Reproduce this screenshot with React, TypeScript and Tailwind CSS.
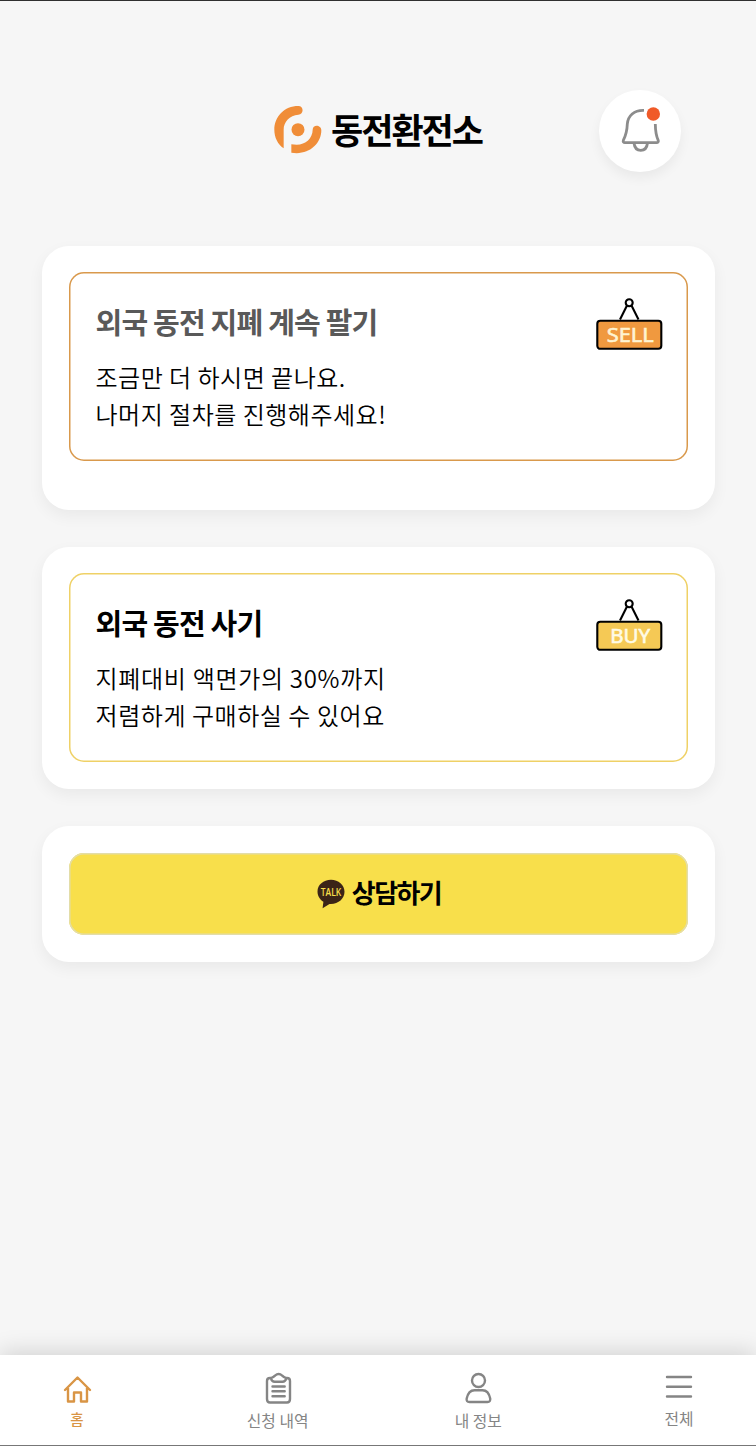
import React from "react";

function Logo() {
  return (
    <svg viewBox="41 45 144 147" className="h-[49px] w-12 shrink-0" fill="#f08d38">
      <path d="M114 48C72 48 42 80 42 119C42 142 52 162 70 175V119C70 95 88 76 114 74C131 73 131 48 114 48Z" />
      <path d="M157 119C157 144 136 164 109 164L93 163V188C143 197 183 163 183 121C183 104 157 102 157 119Z" />
      <circle cx="113" cy="119" r="19.5" />
    </svg>
  );
}

function Bell() {
  return (
    <svg viewBox="9 10 82 82" className="h-[82px] w-[82px] shrink-0" fill="none" stroke="#8c8c8c" strokeWidth="2.8">
      <path d="M54 30.4C44 30 38 36 37.3 44C37 53 35.5 56 33.4 60.2C32.8 61.6 33.5 62.7 35 62.7H66.5C68 62.7 68.7 61.5 68.2 60.3C65.5 54.5 65.4 51 65.3 44" />
      <path d="M44 63C44.5 67.5 47 70.4 50.8 70.4C54.5 70.4 57 67.5 57.5 63" />
      <circle cx="63.3" cy="34" r="6.7" fill="#f05a28" stroke="none" />
    </svg>
  );
}

function Sign({ label, fill, ink, width }: { label: string; fill: string; ink: string; width: number }) {
  return (
    <svg viewBox="0 0 68 54" className="h-[54px] w-[68px] shrink-0" stroke="#000" strokeWidth="2.1">
      <path d="M25 22.5L32 8.5M43.5 22.5L36.5 8.5" fill="none" />
      <circle cx="34.2" cy="5.7" r="3.5" fill="#fff" />
      <rect x="2.3" y="23.8" width="64" height="28" rx="3" fill={fill} />
      <text
        x="35.2"
        y="45"
        textAnchor="middle"
        textLength={width}
        lengthAdjust="spacingAndGlyphs"
        fill={ink}
        stroke={ink}
        strokeWidth="0.6"
        className="font-['Noto_Sans',sans-serif] text-[20px] font-normal"
      >
        {label}
      </text>
    </svg>
  );
}

function TalkIcon() {
  return (
    <svg viewBox="0 0 28 30" className="block h-[30px] w-7 shrink-0 overflow-visible">
      <path d="M14 0.8C6.4 0.8 0.5 5.9 0.5 12.5C0.5 17 3 20.8 6.4 22.7L5.6 29.2L12.5 24.9C21 25.5 27.5 20 27.5 12.8C27.5 6 21.5 0.8 14 0.8Z" fill="#3b2417" />
      <text x="14" y="16.7" textAnchor="middle" textLength="20.5" lengthAdjust="spacingAndGlyphs" fill="#f8df4b" className="font-['Open_Sans',sans-serif] text-[10.5px] font-semibold">
        TALK
      </text>
    </svg>
  );
}

function Card({ className, children }: { className: string; children: React.ReactNode }) {
  return (
    <section className={`w-[673px] rounded-[27px] bg-white px-[27px] shadow-[0_6px_16px_rgba(0,0,0,0.055)] ${className}`}>
      {children}
    </section>
  );
}

function Tab({ className, label, children }: { className: string; label: string; children: React.ReactNode }) {
  return (
    <button className={`flex w-[100px] flex-col items-center ${className}`}>
      <svg viewBox="0 0 34 34" className="h-[34px] w-[34px] overflow-visible" fill="none" stroke="currentColor" strokeWidth="2.4" strokeLinejoin="round" strokeLinecap="round">
        {children}
      </svg>
      <span className="mt-[2px] text-[15.8px] leading-[22px] whitespace-nowrap">{label}</span>
    </button>
  );
}

export default function App() {
  return (
    <div className="flex h-[1446px] w-[756px] flex-col overflow-hidden border-t border-[#303030] bg-[#f6f6f6] font-['Noto_Sans_CJK_KR',sans-serif] text-black">
      <header className="flex h-[245px] shrink-0 items-start pl-[274px]">
        <div className="mt-[104px] flex h-[49px] items-center">
          <Logo />
          <h1 className="mb-[2px] ml-[9px] w-[155px] text-[35px] leading-[49px] font-bold tracking-[-2px] whitespace-nowrap">동전환전소</h1>
        </div>
        <div className="mt-[89px] ml-[113px] flex h-[82px] w-[82px] items-center justify-center rounded-full bg-white shadow-[0_6px_12px_rgba(0,0,0,0.055)]">
          <Bell />
        </div>
      </header>

      <main className="flex flex-1 flex-col pl-[42px]">
        <Card className="h-[264px] pt-[26px]">
          <div className="flex h-[189px] justify-between rounded-[15px] pt-[25px] pr-[25px] pl-[26.5px] shadow-[inset_0_0_0_1.5px_#d9994c]">
            <div>
              <h2 className="mt-[4px] text-[29px] leading-[40px] font-bold tracking-[-0.8px] text-[#595959]">외국 동전 지폐 계속 팔기</h2>
              <p className="mt-[17px] text-[24px] leading-[37px] font-[350] tracking-[0.5px]">조금만 더 하시면 끝나요.<br />나머지 절차를 진행해주세요!</p>
            </div>
            <Sign label="SELL" fill="#f0993f" ink="#fff4d2" width={47} />
          </div>
        </Card>

        <Card className="mt-[37px] h-[242px] pt-[26px]">
          <div className="flex h-[189px] justify-between rounded-[15px] pt-[25px] pr-[25px] pl-[26.5px] shadow-[inset_0_0_0_1.5px_#efd166]">
            <div>
              <h2 className="mt-[4px] text-[29px] leading-[40px] font-bold tracking-[-0.8px]">외국 동전 사기</h2>
              <p className="mt-[17px] text-[24px] leading-[37px] font-[350] tracking-[0.55px]"><span className="tracking-[0.7px]">지폐대비 액면가의 30%까지</span><br />저렴하게 구매하실 수 있어요</p>
            </div>
            <Sign label="BUY" fill="#f5c955" ink="#fffbe6" width={40} />
          </div>
        </Card>

        <Card className="mt-[37px] h-[136px] pt-[27px]">
          <button className="flex h-[82px] w-full items-center justify-center gap-[7px] rounded-[15px] bg-[#f8df4b] pb-[5px] pl-[1px] shadow-[inset_0_0_0_1.5px_#e3dda8]">
            <span className="pt-[4px]"><TalkIcon /></span>
            <span className="text-[26px] leading-[36px] font-bold tracking-[-1.6px]">상담하기</span>
          </button>
        </Card>
      </main>

      <nav className="relative flex h-[91px] shrink-0 justify-between border-b border-[#777] bg-white pr-[27px] pl-[27px] text-[#858585] shadow-[0_-3px_22px_rgba(0,0,0,0.15)]">
        <Tab className="pt-[17px] text-[#d99545] [&>span]:text-[14.5px] [&>span]:font-medium" label="홈">
          <path d="M5 18L17.5 5.5L30 18M8 16V29.5H14V20.5H21V29.5H27V16" />
        </Tab>
        <Tab className="pt-[19px]" label="신청 내역">
          <path d="M10.5 4H9Q6 4 6 7V25Q6 28.5 9 28.5H26Q29 28.5 29 25V7Q29 4 26 4H25M10 4.2Q12.5 3.2 14 1.6Q17.7 -1.4 21.2 1.6Q22.7 3.2 25.2 4.2Q24.5 7.7 21.5 7.7H13.7Q10.7 7.7 10 4.2Z" />
          <path d="M11.5 12.5H23.7M11.5 17.3H23.7M11.5 22.2H23.7" />
        </Tab>
        <Tab className="pt-[19px]" label="내 정보">
          <circle cx="17.5" cy="6.5" r="6.5" />
          <path d="M13.5 16.2H21.5Q27.5 16.2 29.2 24.5Q29.7 28 26.5 28H8.5Q5 28 5.7 24.5Q7.5 16.2 13.5 16.2Z" />
        </Tab>
        <Tab className="pt-[17px]" label="전체">
          <path d="M5 5H29M5 14.7H29M5 24.5H29" />
        </Tab>
      </nav>
    </div>
  );
}
